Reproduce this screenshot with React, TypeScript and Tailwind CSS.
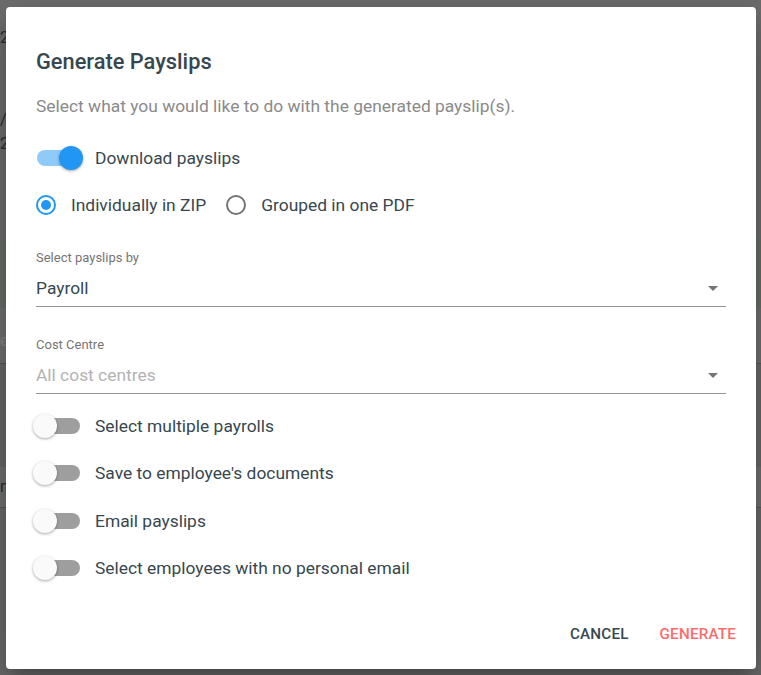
import React from 'react';

const font = { fontFamily: 'Roboto, "Liberation Sans", sans-serif' };

interface ToggleProps {
  on?: boolean;
  label: string;
}

const Toggle: React.FC<ToggleProps> = ({ on, label }) => {
  return (
    <div className="flex items-center h-[47.5px]">
      <div className="relative w-[50px] h-6 flex items-center">
        <div
          className={
            on
              ? 'absolute left-[1px] w-[44px] h-4 rounded-full bg-[#90caf9]'
              : 'absolute left-[4px] w-[40px] h-4 rounded-full bg-[#9e9e9e]'
          }
        />
        <div
          className={
            on
              ? 'absolute left-[23px] w-6 h-6 rounded-full bg-[#2196f3] shadow-[0_1px_3px_rgba(0,0,0,0.35)]'
              : 'absolute left-[-3px] w-6 h-6 rounded-full bg-[#fafafa] shadow-[0_1px_3px_rgba(0,0,0,0.35)]'
          }
        />
      </div>
      <span className="ml-[9px] text-[17.4px] leading-6 text-[#37474f]">{label}</span>
    </div>
  );
};

const Radio: React.FC<{ checked?: boolean; label: string }> = ({ checked, label }) => {
  return (
    <div className="flex items-center">
      <div
        className={
          checked
            ? 'w-5 h-5 rounded-full border-2 border-[#2196f3] flex items-center justify-center'
            : 'w-5 h-5 rounded-full border-2 border-[#757575]'
        }
      >
        {checked && <div className="w-[10px] h-[10px] rounded-full bg-[#2196f3]" />}
      </div>
      <span className="ml-[15px] text-[17.4px] leading-6 text-[#37474f]">{label}</span>
    </div>
  );
};

const ArrowDropDown = () => (
  <svg width="24" height="24" viewBox="0 0 24 24" className="shrink-0">
    <path d="M7 10l5 5 5-5z" fill="#757575" />
  </svg>
);

const SelectField: React.FC<{ label: string; value: string; placeholder?: boolean }> = ({
  label,
  value,
  placeholder,
}) => {
  return (
    <div>
      <div className="text-[13px] leading-4 text-[#757575]">{label}</div>
      <div className="mt-[10px] pb-[6px] border-b border-[#949494] flex items-center justify-between">
        <span
          className={
            placeholder
              ? 'text-[17.4px] leading-6 text-[#b3b3b3]'
              : 'text-[17.4px] leading-6 text-[#37474f]'
          }
        >
          {value}
        </span>
        <span className="mr-[1px]">
          <ArrowDropDown />
        </span>
      </div>
    </div>
  );
};

export default function App() {
  return (
    <div className="relative w-[761px] h-[675px] overflow-hidden bg-[#6e6e6e]" style={font}>
      {/* page behind the backdrop */}
      <div className="flex flex-col h-full text-[#2c2c2c] text-base">
        <div className="h-[26px]" />
        <div className="h-6 leading-6">2</div>
        <div className="h-[58px]" />
        <div className="h-6 leading-6">/</div>
        <div className="h-6 leading-6">2</div>
        <div className="h-[82px]" />
        <div className="h-[70px] bg-[#687068]" />
        <div className="h-[55px] bg-[#727272] flex items-end text-[#8a8a8a]">
          <span className="mb-[10px]">e</span>
        </div>
        <div className="h-px bg-[#595959]" />
        <div className="h-[103px] bg-[#6a6a6a]" />
        <div className="h-[40px] bg-[#727272] flex items-center">
          <span>n</span>
        </div>
        <div className="h-px bg-[#595959]" />
        <div className="flex-1 bg-[#6c6c6c]" />
      </div>

      {/* dialog */}
      <div className="absolute left-[6px] top-[7px] w-[750px] h-[662px] bg-white rounded-[4px] shadow-[0_11px_15px_-7px_rgba(0,0,0,0.2),0_24px_38px_3px_rgba(0,0,0,0.14),0_9px_46px_8px_rgba(0,0,0,0.12)] flex flex-col">
        <div className="px-[30px] pt-[39px] flex flex-col">
          <h2 className="h-8 leading-8 text-[21.8px] font-medium text-[#37474f]">Generate Payslips</h2>
          <p className="mt-[16px] h-6 leading-6 text-[17.4px] text-[#8a8a8a]">
            Select what you would like to do with the generated payslip(s).
          </p>

          <div className="mt-[21px] h-[38px] flex items-center">
            <Toggle on label="Download payslips" />
          </div>

          <div className="mt-[9px] h-[38px] flex items-center gap-5">
            <Radio checked label="Individually in ZIP" />
            <Radio label="Grouped in one PDF" />
          </div>

          <div className="mt-[26px]">
            <SelectField label="Select payslips by" value="Payroll" />
          </div>
          <div className="mt-[30px]">
            <SelectField label="Cost Centre" value="All cost centres" placeholder />
          </div>

          <div className="mt-[8px] flex flex-col">
            <Toggle label="Select multiple payrolls" />
            <Toggle label="Save to employee's documents" />
            <Toggle label="Email payslips" />
            <Toggle label="Select employees with no personal email" />
          </div>
        </div>

        <div className="mt-auto pb-[17px] pr-[20px] flex justify-end items-center gap-[31px]">
          <button className="h-9 text-[15.2px] font-medium uppercase tracking-[0.2px] text-[#37474f]">
            Cancel
          </button>
          <button className="h-9 text-[15.2px] font-medium uppercase tracking-[0.2px] text-[#ff6b6b]">
            Generate
          </button>
        </div>
      </div>
    </div>
  );
}
